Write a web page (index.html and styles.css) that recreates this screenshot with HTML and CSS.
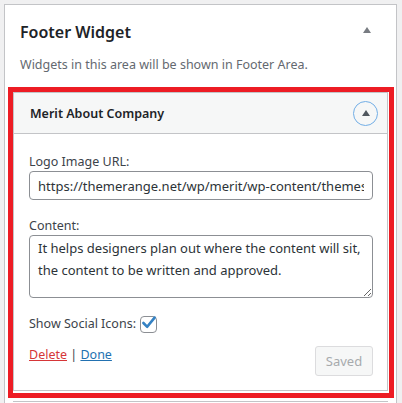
FILE: index.html
```html
<!DOCTYPE html>
<html lang="en">
<head>
<meta charset="utf-8">
<title>Footer Widget</title>
<link rel="stylesheet" href="styles.css">
</head>
<body>
<div class="panel">
  <div class="panel-head">
    <h2 class="panel-title">Footer Widget</h2>
    <span class="panel-arrow"></span>
  </div>
  <p class="panel-desc">Widgets in this area will be shown in Footer Area.</p>
  <div class="highlight">
    <div class="widget">
      <div class="widget-top">
        <h3 class="widget-title">Merit About Company</h3>
        <button class="widget-toggle" type="button"><span class="toggle-arrow"></span></button>
      </div>
      <div class="widget-inside">
        <div class="field">
          <label class="field-label">Logo Image URL:</label>
          <input class="text-input" type="text" value="https://themerange.net/wp/merit/wp-content/themes/merit/assets/images/logo.png">
        </div>
        <div class="field field-gap">
          <label class="field-label">Content:</label>
          <textarea class="text-area" rows="2">It helps designers plan out where the content will sit, the content to be written and approved.</textarea>
        </div>
        <div class="check-row">
          <span class="check-label">Show Social Icons:</span>
          <span class="checkbox">
            <svg viewBox="0 0 20 20" width="20" height="20"><path d="M4.4 10 L8.2 13.8 L15.6 4.6" fill="none" stroke="#3582c4" stroke-width="2.6" stroke-linecap="round" stroke-linejoin="round"/></svg>
          </span>
        </div>
        <div class="actions">
          <div class="links"><a class="link-delete" href="#">Delete</a> <span class="sep">|</span> <a class="link-done" href="#">Done</a></div>
          <button class="saved-btn" type="button" disabled>Saved</button>
        </div>
      </div>
    </div>
  </div>
  <div class="next-widget"></div>
</div>
</body>
</html>
```

FILE: styles.css
```css
html, body {
  margin: 0;
  padding: 0;
  background: #f0f0f1;
}
body {
  font-family: "Noto Sans", "Open Sans", "Liberation Sans", sans-serif;
  font-size: 12.5px;
  color: #3c434a;
  height: 403px;
  overflow: hidden;
}
.panel {
  margin: 4px 5px 0 4px;
  background: #fff;
  border: 1px solid #c3c4c7;
  border-bottom: none;
  height: 399px;
  box-sizing: border-box;
  overflow: hidden;
}
.panel-head {
  display: flex;
  justify-content: space-between;
  align-items: flex-start;
  padding: 15px 25px 0 15px;
}
.panel-title {
  margin: 0;
  font-size: 16px;
  line-height: 24px;
  font-weight: 600;
  color: #1d2327;
}
.panel-arrow {
  width: 0;
  height: 0;
  border-left: 4px solid transparent;
  border-right: 4px solid transparent;
  border-bottom: 6px solid #787c82;
  margin-top: 7px;
}
.panel-desc {
  margin: 11px 0 0 15px;
  font-size: 12.5px;
  line-height: 20px;
  color: #646970;
}
.highlight {
  margin: 12px 2px 0 3px;
  border: 5px solid #ed1c24;
  padding: 0 1px 2px 0;
}
.widget {
  border: 1px solid #c3c4c7;
  background: #fff;
}
.widget-top {
  display: flex;
  justify-content: space-between;
  align-items: center;
  background: #f6f7f7;
  border-bottom: 1px solid #c3c4c7;
  height: 40px;
  padding: 0 9px 0 16px;
}
.widget-title {
  margin: 0;
  font-size: 12.5px;
  font-weight: 600;
  color: #1d2327;
}
.widget-toggle {
  width: 25px;
  height: 25px;
  border-radius: 50%;
  border: 1px solid #72aee6;
  background: transparent;
  padding: 0;
  display: flex;
  align-items: center;
  justify-content: center;
}
.toggle-arrow {
  width: 0;
  height: 0;
  border-left: 4px solid transparent;
  border-right: 4px solid transparent;
  border-bottom: 6px solid #50575e;
  margin-top: -1px;
}
.widget-inside {
  padding: 19px 14px 14px 15px;
}
.field {
  display: flex;
  flex-direction: column;
}
.field-gap {
  margin-top: 17px;
}
.field-label {
  font-size: 12.5px;
  line-height: 18px;
  color: #3c434a;
}
.text-input,
.text-area {
  font-family: inherit;
  font-size: 13px;
  color: #2c3338;
  border: 1px solid #8c8f94;
  border-radius: 4px;
  background: #fff;
  margin: 0;
  box-sizing: border-box;
  width: 100%;
}
.text-input {
  height: 29px;
  padding: 0 8px;
}
.text-area {
  height: 63px;
  padding: 1px 8px;
  line-height: 22px;
  resize: vertical;
}
.check-row {
  display: flex;
  align-items: center;
  gap: 4px;
  height: 20px;
  margin-top: 16px;
}
.check-label {
  line-height: 20px;
}
.checkbox {
  width: 17px;
  height: 17px;
  box-sizing: border-box;
  border: 1px solid #8c8f94;
  border-radius: 4px;
  display: flex;
  align-items: center;
  justify-content: center;
}
.checkbox svg {
  flex: none;
  margin: -2px -1px 0 0;
}
.actions {
  display: flex;
  justify-content: space-between;
  align-items: flex-start;
  margin-top: 11px;
}
.links {
  line-height: 20px;
}
.link-delete {
  color: #d63638;
}
.link-done {
  color: #2271b1;
}
.sep {
  color: #3c434a;
}
.saved-btn {
  font-family: inherit;
  font-size: 13px;
  width: 58px;
  height: 30px;
  margin-top: 1px;
  border: 1px solid #dcdcde;
  border-radius: 3px;
  background: #f6f7f7;
  color: #a7aaad;
  padding: 0;
}
.next-widget {
  margin: 3px 8px 0 8px;
  border-top: 1px solid #c3c4c7;
  height: 4px;
}
```
